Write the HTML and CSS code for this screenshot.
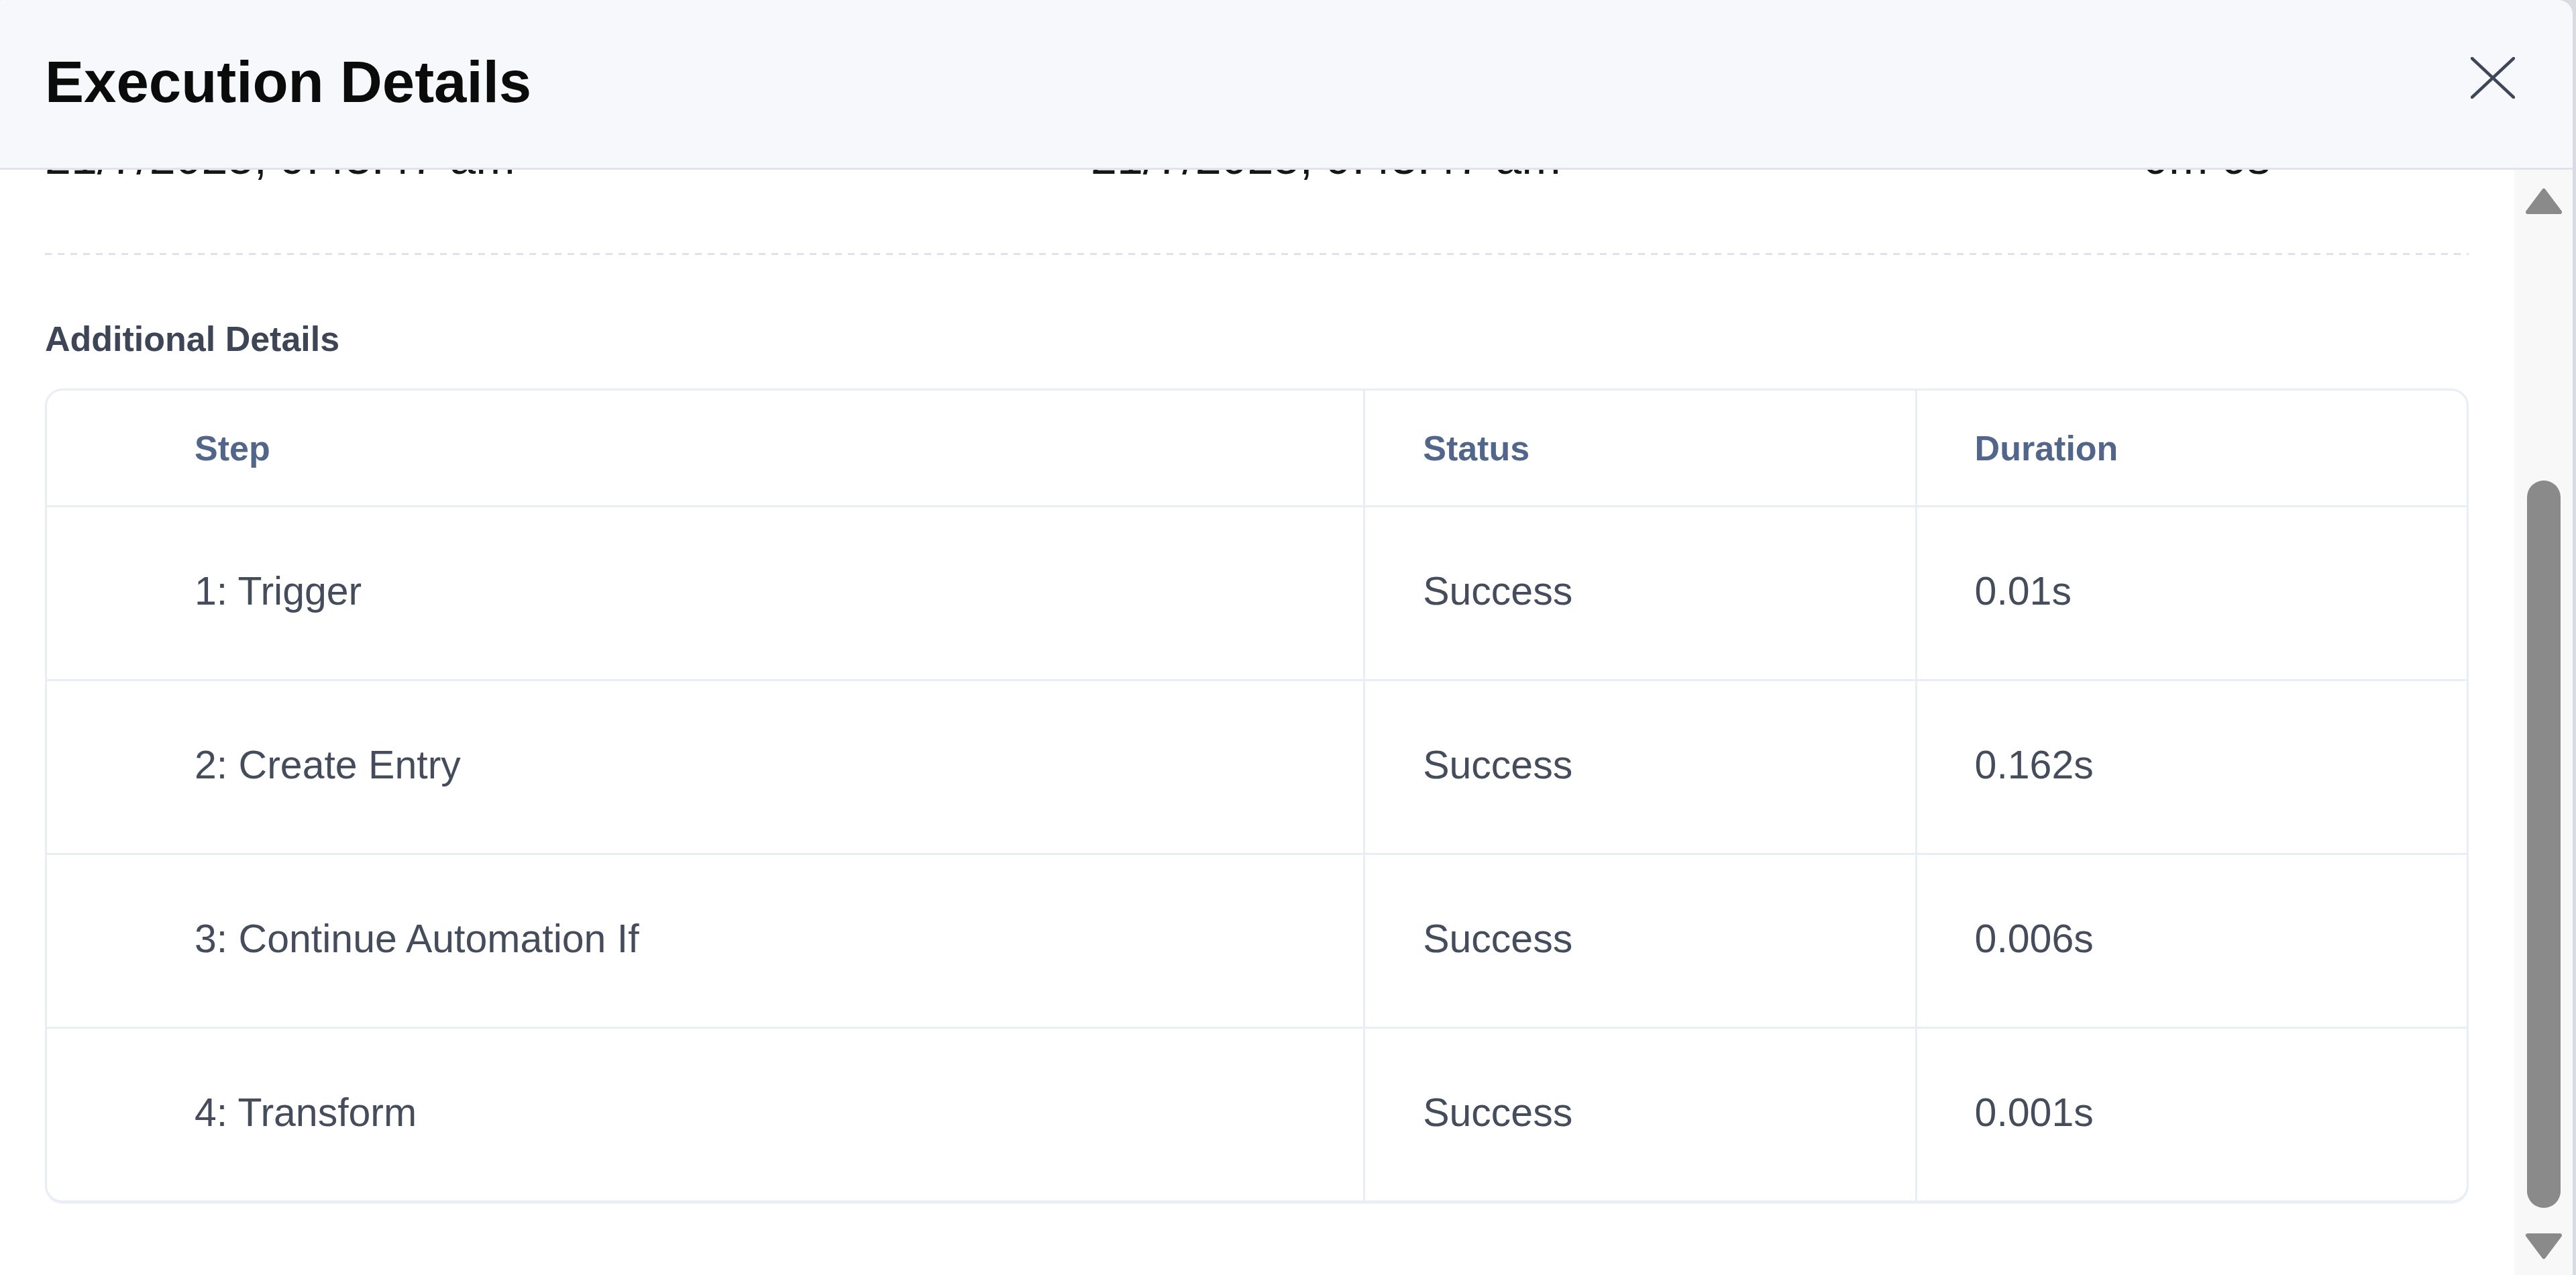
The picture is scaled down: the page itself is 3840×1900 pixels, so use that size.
FILE: index.html
```html
<!DOCTYPE html>
<html lang="en">
<head>
  <meta charset="UTF-8" />
  <meta name="viewport" content="width=device-width, initial-scale=1" />
  <title>Execution Details</title>
  <link rel="stylesheet" href="styles.css">
</head>
<body>

  <div class="modal">
    <div class="modal-header">
      <h1>Execution Details</h1>
      <button class="close-btn" aria-label="Close">
        <svg width="66" height="62" viewBox="0 0 66 62">
          <path d="M2 2 L64 60 M64 2 L2 60" stroke="#3e4657" stroke-width="4.5" stroke-linecap="round" fill="none"/>
        </svg>
      </button>
    </div>

    <div class="modal-body">
      <div class="content">
        <div class="summary">
          <span>21/7/2025, 9:43:47 am</span>
          <span>21/7/2025, 9:43:47 am</span>
          <span>0m 0s</span>
        </div>
        <div class="divider"></div>

        <h2 class="section-title">Additional Details</h2>
        <div class="steps-card">
          <table>
            <colgroup>
              <col style="width:54.4%">
              <col style="width:22.8%">
              <col>
            </colgroup>
            <thead>
              <tr>
                <th class="col-step">Step</th>
                <th>Status</th>
                <th>Duration</th>
              </tr>
            </thead>
            <tbody>
              <tr>
                <td class="col-step">1: Trigger</td>
                <td>Success</td>
                <td>0.01s</td>
              </tr>
              <tr>
                <td class="col-step">2: Create Entry</td>
                <td>Success</td>
                <td>0.162s</td>
              </tr>
              <tr>
                <td class="col-step">3: Continue Automation If</td>
                <td>Success</td>
                <td>0.006s</td>
              </tr>
              <tr>
                <td class="col-step">4: Transform</td>
                <td>Success</td>
                <td>0.001s</td>
              </tr>
            </tbody>
          </table>
        </div>
      </div>

      <div class="scrollbar">
        <svg class="arrow" width="56" height="40" viewBox="0 0 56 40">
          <polygon points="28,4 52,36 4,36" fill="#8a8a8a" stroke="#8a8a8a" stroke-width="6" stroke-linejoin="round"/>
        </svg>
        <div class="scroll-thumb"></div>
        <svg class="arrow" width="56" height="40" viewBox="0 0 56 40">
          <polygon points="4,4 52,4 28,36" fill="#8a8a8a" stroke="#8a8a8a" stroke-width="6" stroke-linejoin="round"/>
        </svg>
      </div>
    </div>
  </div>

</body>
</html>
```

FILE: styles.css
```css
body { margin: 0; height: 1900px; overflow: hidden; background: #d8dbe1; font-family: "Liberation Sans", Arial, sans-serif; }

.modal { margin-left: -16px; width: 3851px; height: 1900px; background: #fff; border-radius: 22px 22px 0 0; overflow: hidden; display: flex; flex-direction: column; }

.modal-header { box-sizing: border-box; height: 253px; flex-shrink: 0; display: flex; justify-content: space-between; align-items: flex-start; padding: 78px 86px 0 83px; background: #f7f8fc; border-bottom: 3px solid #dfe3ee; }
.modal-header h1 { margin: 0; font-size: 87px; line-height: 88px; font-weight: bold; color: #0b0b0b; }
.close-btn { margin-top: 7px; padding: 0; border: 0; background: none; line-height: 0; cursor: pointer; }

.modal-body { flex: 1; min-height: 0; display: flex; }
.content { flex: 1; overflow: hidden; padding: 0 68px 0 83px; }

.summary { margin-top: -58px; padding-bottom: 102px; display: grid; grid-template-columns: 1559px 1568px 1fr; font-size: 70px; line-height: 80px; color: #161616; }
.divider { height: 3px; background: repeating-linear-gradient(90deg, #dde2ec 0 10px, transparent 10px 19px); }

.section-title { margin: 95px 0 44px; font-size: 52px; line-height: 60px; font-weight: bold; color: #3d4556; }

.steps-card { border: 3px solid #e9edf5; border-radius: 26px; overflow: hidden; box-shadow: 0 2px 0 #eef1f7; }
.steps-card table { width: 100%; border-spacing: 0; table-layout: fixed; }
.steps-card th { padding: 56px 0 55px 86px; font-size: 52px; line-height: 60px; font-weight: bold; text-align: left; color: #52658a; border-bottom: 3px solid #e9edf5; }
.steps-card td { padding: 92px 0 98px 86px; font-size: 59px; line-height: 66px; color: #454c5c; border-bottom: 3px solid #e9edf5; }
.steps-card tr:last-child td { border-bottom: none; }
.steps-card th + th, .steps-card td + td { border-left: 3px solid #e9edf5; }
.steps-card .col-step { padding-left: 220px; }

.scrollbar { box-sizing: border-box; width: 87px; flex-shrink: 0; display: flex; flex-direction: column; align-items: center; padding: 27px 0 23px; background: #f8f8f8; }
.scroll-thumb { width: 50px; height: 1084px; margin-top: auto; margin-bottom: 37px; border-radius: 25px; background: #8a8a8a; }
.arrow { display: block; }
```
